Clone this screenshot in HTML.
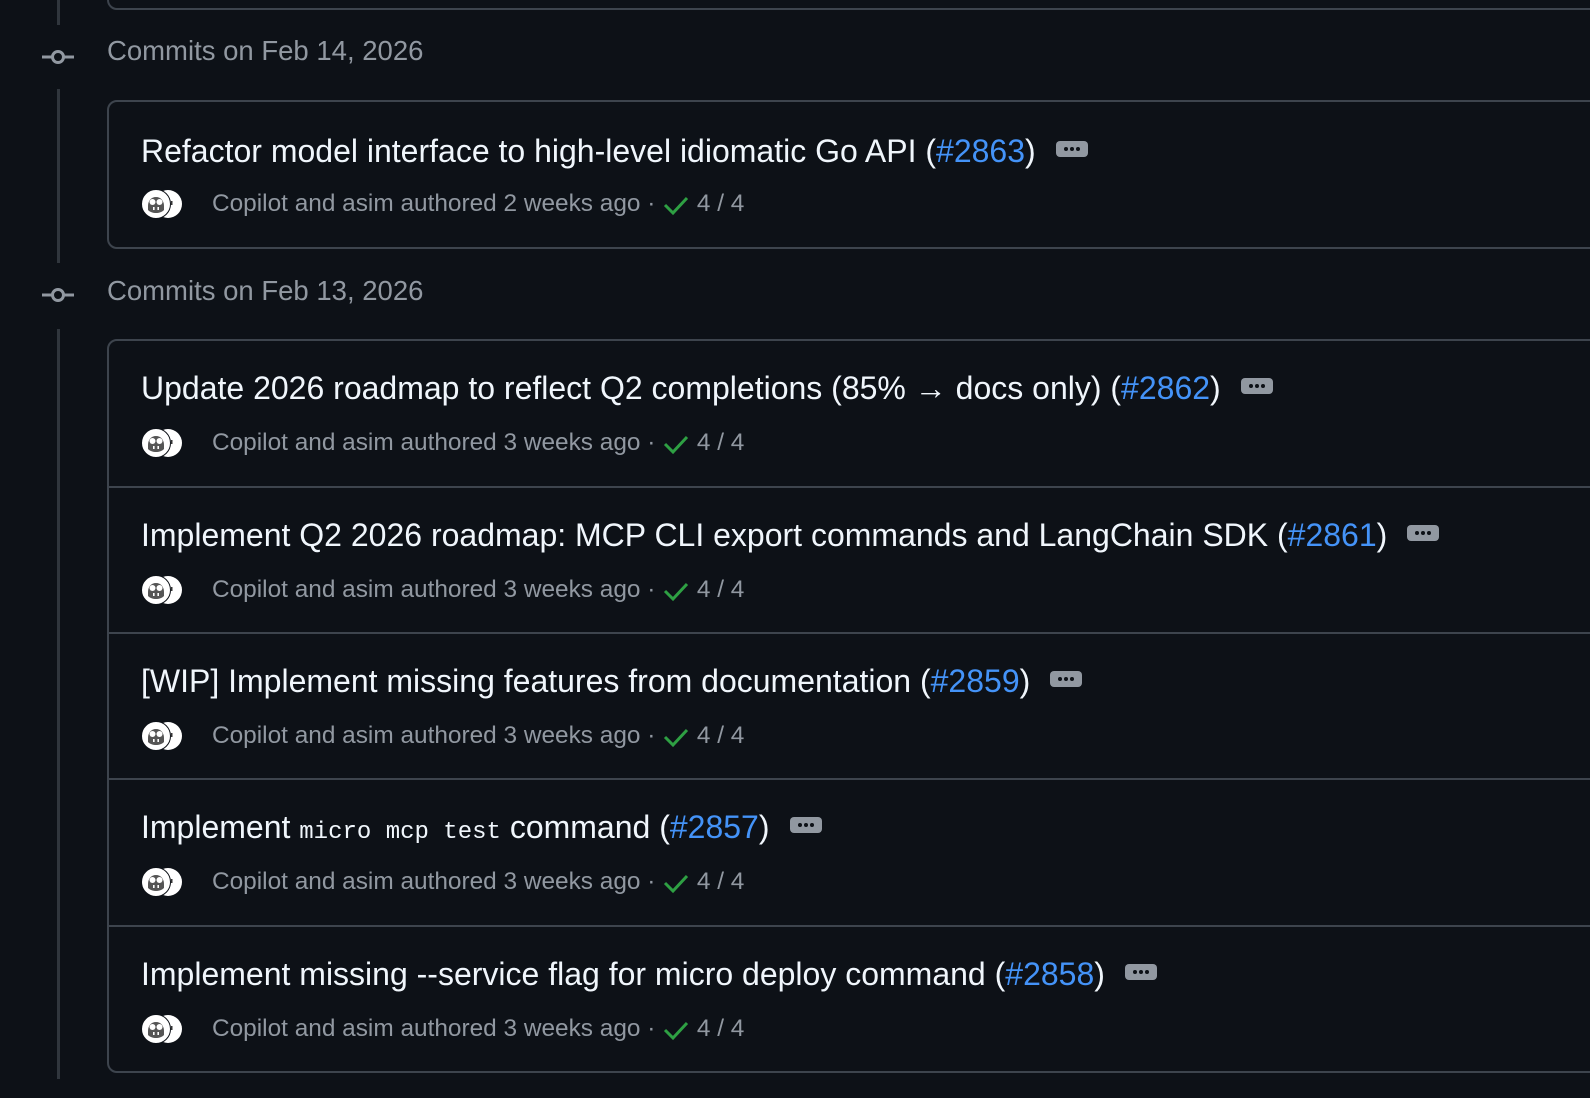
<!DOCTYPE html>
<html><head><style>
*{box-sizing:border-box;margin:0;padding:0}
body{width:1590px;height:1098px;background:#0d1117;font-family:"Liberation Sans",sans-serif;position:relative;overflow:hidden;color:#f0f6fc}
.line{position:absolute;left:57px;width:3px;background:#30363d}
.date{position:absolute;left:107px;font-size:27.5px;color:#9198a1;line-height:30px}
.node{position:absolute;left:42px;width:32px;height:14px}
.card{position:absolute;left:107px;width:1520px;border:2px solid #3d444d;border-radius:10px}
.row{height:145px;border-top:2px solid #3d444d;position:relative}
.row:first-child{border-top:none}
.title{position:absolute;left:32px;top:27px;font-size:32px;line-height:40px;white-space:nowrap;color:#f0f6fc}
.title a{color:#4493f8;text-decoration:none}
.title code{font-family:"Liberation Mono",monospace;font-size:24px}
.kb{display:inline-block;width:32px;height:16px;background:#9198a1;border-radius:4px;vertical-align:top;margin-left:20px;margin-top:10px;position:relative}
.kb::after{content:"";position:absolute;left:8px;top:6px;width:4px;height:4px;border-radius:2px;background:#0d1117;box-shadow:6px 0 #0d1117,12px 0 #0d1117}
.meta{position:absolute;left:32px;top:86px;height:32px;font-size:24.4px;color:#9198a1;line-height:32px;white-space:nowrap}
.av{position:absolute;left:0;top:1px;width:42px;height:30px}
.meta .t{position:absolute;left:71px;top:0}
</style></head><body>
<div class="line" style="top:0;height:25px"></div>
<div class="line" style="top:89px;height:174px"></div>
<div class="line" style="top:329px;height:750px"></div>
<div class="card" style="top:-40px;height:50px"></div>

<svg class="node" style="top:50px" viewBox="0 0 32 14"><line x1="0" y1="7" x2="32" y2="7" stroke="#9198a1" stroke-width="3"/><circle cx="16" cy="7" r="5.5" fill="#0d1117" stroke="#9198a1" stroke-width="3"/></svg>
<div class="date" style="top:36px">Commits on Feb 14, 2026</div>
<svg class="node" style="top:288px" viewBox="0 0 32 14"><line x1="0" y1="7" x2="32" y2="7" stroke="#9198a1" stroke-width="3"/><circle cx="16" cy="7" r="5.5" fill="#0d1117" stroke="#9198a1" stroke-width="3"/></svg>
<div class="date" style="top:276px">Commits on Feb 13, 2026</div>

<svg width="0" height="0" style="position:absolute"><defs>
<g id="av"><circle cx="27" cy="15" r="14" fill="#fff"/><circle cx="15" cy="15" r="14.5" fill="#fff" stroke="#0d1117" stroke-width="1"/>
<path d="M7 17c0-5 3-9 8-9s8 4 8 9v4c-2 2-5 3-8 3s-6-1-8-3z" fill="#555"/><circle cx="11.5" cy="13" r="3" fill="#fff"/><circle cx="18.5" cy="13" r="3" fill="#fff"/><rect x="12" y="18" width="1.6" height="3" fill="#fff"/><rect x="16.4" y="18" width="1.6" height="3" fill="#fff"/><rect x="30" y="12" width="1.5" height="4" fill="#333"/></g>
<g id="ck"><path d="M3 12l8 8L25 5" fill="none" stroke="#2ea043" stroke-width="3"/></g>
</defs></svg>

<div class="card" style="top:100px;height:149px">
<div class="row"><div class="title" style="top:29px">Refactor model interface to high-level idiomatic Go API (<a>#2863</a>)<span class="kb"></span></div>
<div class="meta"><svg class="av" viewBox="0 0 42 30"><use href="#av"/></svg><span class="t">Copilot and asim authored 2 weeks ago · <svg width="28" height="24" viewBox="0 0 28 24" style="vertical-align:-6px"><use href="#ck"/></svg> 4 / 4</span></div></div>
</div>

<div class="card" style="top:339px;height:734px">
<div class="row" style="height:145px"><div class="title">Update 2026 roadmap to reflect Q2 completions (85% → docs only) (<a>#2862</a>)<span class="kb"></span></div>
<div class="meta"><svg class="av" viewBox="0 0 42 30"><use href="#av"/></svg><span class="t">Copilot and asim authored 3 weeks ago · <svg width="28" height="24" viewBox="0 0 28 24" style="vertical-align:-6px"><use href="#ck"/></svg> 4 / 4</span></div></div>
<div class="row" style="height:146px"><div class="title">Implement Q2 2026 roadmap: MCP CLI export commands and LangChain SDK (<a>#2861</a>)<span class="kb"></span></div>
<div class="meta"><svg class="av" viewBox="0 0 42 30"><use href="#av"/></svg><span class="t">Copilot and asim authored 3 weeks ago · <svg width="28" height="24" viewBox="0 0 28 24" style="vertical-align:-6px"><use href="#ck"/></svg> 4 / 4</span></div></div>
<div class="row" style="height:146px"><div class="title">[WIP] Implement missing features from documentation (<a>#2859</a>)<span class="kb"></span></div>
<div class="meta"><svg class="av" viewBox="0 0 42 30"><use href="#av"/></svg><span class="t">Copilot and asim authored 3 weeks ago · <svg width="28" height="24" viewBox="0 0 28 24" style="vertical-align:-6px"><use href="#ck"/></svg> 4 / 4</span></div></div>
<div class="row" style="height:147px"><div class="title">Implement <code>micro mcp test</code> command (<a>#2857</a>)<span class="kb"></span></div>
<div class="meta"><svg class="av" viewBox="0 0 42 30"><use href="#av"/></svg><span class="t">Copilot and asim authored 3 weeks ago · <svg width="28" height="24" viewBox="0 0 28 24" style="vertical-align:-6px"><use href="#ck"/></svg> 4 / 4</span></div></div>
<div class="row" style="height:148px"><div class="title">Implement missing --service flag for micro deploy command (<a>#2858</a>)<span class="kb"></span></div>
<div class="meta"><svg class="av" viewBox="0 0 42 30"><use href="#av"/></svg><span class="t">Copilot and asim authored 3 weeks ago · <svg width="28" height="24" viewBox="0 0 28 24" style="vertical-align:-6px"><use href="#ck"/></svg> 4 / 4</span></div></div>
</div>
</body></html>
